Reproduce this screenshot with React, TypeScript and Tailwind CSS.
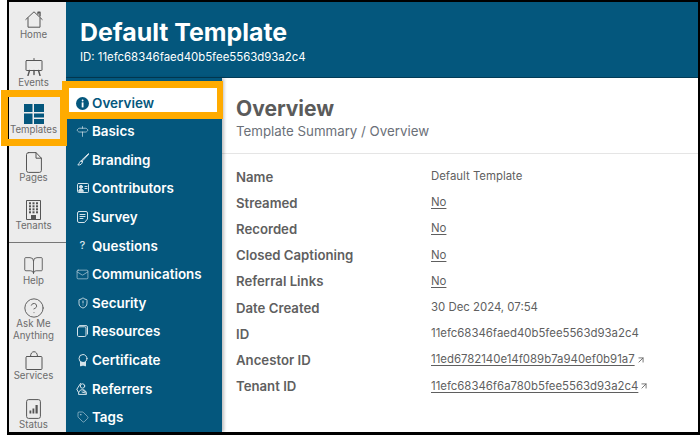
import React from "react";
import { BookOpen, CircleHelp, Signpost, Mail, ShieldAlert, Tag, ArrowUpRight } from "lucide-react";

function RailItem({ icon, label, className = "" }: { icon: React.ReactNode; label: string[]; className?: string }) {
  return (
    <div className={"flex flex-col items-center text-[#6b6b6b] pr-[8px] shrink-0 " + className}>
      <div className="h-[19px] flex items-center justify-center">{icon}</div>
      <div className="text-[9.7px] leading-[12px] mt-[0.6px] text-center whitespace-nowrap">
        {label.map((l) => (
          <div key={l}>{l}</div>
        ))}
      </div>
    </div>
  );
}

const S = { fill: "none", stroke: "#555", strokeWidth: 1, strokeLinejoin: "round" as const, strokeLinecap: "round" as const };

const HomeIcon = () => (
  <svg width="18" height="17" viewBox="0 0 18 17" {...S}>
    <path d="M0.8 8.5 9 0.8l8.2 7.7" />
    <path d="M3 7v9.2h12V7" />
    <path d="M13 3V1.2h2V5" strokeWidth="1.4" />
  </svg>
);

const EventsIcon = () => (
  <svg width="18" height="18" viewBox="0 0 18 18" {...S}>
    <path d="M9 0.5v2" />
    <rect x="1" y="2.5" width="16" height="10" rx="0.5" />
    <path d="M4.5 12.5 3 17.5M13.5 12.5 15 17.5M9 12.5v4" strokeWidth="1.4" />
  </svg>
);

const TemplatesIcon = () => (
  <svg width="20" height="20" viewBox="0 0 20 20" fill="#04577d">
    <rect x="0" y="0" width="8.5" height="8" />
    <rect x="10" y="0" width="10" height="8" />
    <rect x="0" y="9.5" width="8.5" height="10.5" />
    <rect x="10" y="9.5" width="10" height="4" />
    <rect x="10" y="15" width="10" height="5" />
  </svg>
);

const PagesIcon = () => (
  <svg width="16" height="21" viewBox="0 0 16 21" {...S}>
    <path d="M2.5 0.6h7.5l5.4 5.6v12.2a2 2 0 0 1-2 2H2.5a2 2 0 0 1-2-2V2.6a2 2 0 0 1 2-2z" />
    <path d="M10 0.6v5.6h5.4" />
  </svg>
);

const TenantIcon = () => (
  <svg width="15" height="20" viewBox="0 0 15 20" fill="#555">
    <path d="M0.5 0.5h14v19h-14z" fill="none" stroke="#555" />
    {[3, 6, 9, 12].map((y) =>
      [3, 6.5, 10].map((x) => <rect key={x + "-" + y} x={x} y={y - 0.7} width="2" height="2" />)
    )}
    <rect x="5" y="15" width="5" height="4.5" />
  </svg>
);

const BagIcon = () => (
  <svg width="18" height="19" viewBox="0 0 18 19" {...S}>
    <rect x="1" y="5.5" width="16" height="13" rx="1" />
    <path d="M5.5 5.5C5.5 2.5 7 0.7 9 0.7s3.5 1.8 3.5 4.8" />
  </svg>
);

const StatusIcon = () => (
  <svg width="15" height="20" viewBox="0 0 15 20" fill="none" stroke="#555" strokeWidth="1">
    <rect x="0.6" y="0.6" width="13.8" height="18.8" rx="2" />
    <rect x="3.5" y="11.5" width="1.8" height="3" fill="#555" stroke="none" />
    <rect x="6.5" y="9.5" width="1.8" height="5" fill="#555" stroke="none" />
    <rect x="9.5" y="6" width="2.2" height="8.5" fill="#555" stroke="none" />
  </svg>
);

const M = { fill: "none", stroke: "#d5e3ea", strokeWidth: 1, strokeLinejoin: "round" as const, strokeLinecap: "round" as const };

const BrushIcon = () => (
  <svg width="12" height="13" viewBox="0 0 12 13" {...M}>
    <path d="M11.3 0.8 5 6.8 4 8.6l1.6-.8 6-6.4z" />
    <path d="M4.2 7.6C2 8.6 2.6 10.6 0.8 12c2.6.2 4.5-.8 4.8-3.6" />
  </svg>
);

const CardIcon = () => (
  <svg width="12" height="10" viewBox="0 0 12 10" {...M}>
    <rect x="0.5" y="0.5" width="11" height="9" rx="1" />
    <circle cx="4" cy="3.8" r="1.5" fill="#d5e3ea" />
    <path d="M1.7 8c.3-1.5 1.2-2 2.3-2s2 .5 2.3 2z" fill="#d5e3ea" />
    <path d="M8 3.5h2M8 5.5h2" />
  </svg>
);

const SurveyIcon = () => (
  <svg width="11" height="12" viewBox="0 0 11 12" {...M}>
    <path d="M2 0.5h7a1.5 1.5 0 0 1 1.5 1.5v6L7.5 11.5H2A1.5 1.5 0 0 1 .5 10V2A1.5 1.5 0 0 1 2 .5z" />
    <path d="M3 3.5h5M3 5.5h5M3 7.5h3" />
  </svg>
);

const ResourcesIcon = () => (
  <svg width="11" height="12" viewBox="0 0 11 12" {...M}>
    <rect x="0.5" y="1.8" width="8.5" height="9.7" rx="1.2" />
    <path d="M2.5 0.6h6.5a1.5 1.5 0 0 1 1.5 1.5v7" />
  </svg>
);

const CertIcon = () => (
  <svg width="10" height="13" viewBox="0 0 10 13" {...M}>
    <circle cx="5" cy="4.5" r="4" />
    <path d="M2.5 8v4l2.5-1 2.5 1V8" fill="#d5e3ea" />
  </svg>
);

const ReferrerIcon = () => (
  <svg width="13" height="13" viewBox="0 0 13 13" {...M}>
    <circle cx="6.5" cy="4" r="2.2" />
    <path d="M2.5 12c0-3 1.8-4.3 4-4.3s4 1.3 4 4.3zM1 7l3.5-5.5M2.5 10.5 1 7.5" />
    <path d="M7 8.5l3 1.5M6 10l3.5 1" />
  </svg>
);

const InfoIcon = () => (
  <svg width="13" height="13" viewBox="0 0 13 13">
    <circle cx="6.5" cy="6.5" r="6.5" fill="#04577d" />
    <rect x="5.7" y="2.6" width="1.8" height="1.8" rx="0.9" fill="white" />
    <rect x="5.7" y="5.4" width="1.8" height="5" fill="white" />
  </svg>
);

const menu: [string, React.ReactNode][] = [
  ["Basics", <Signpost size={13} strokeWidth={1.3} />],
  ["Branding", <BrushIcon />],
  ["Contributors", <CardIcon />],
  ["Survey", <SurveyIcon />],
  ["Questions", <span className="text-[11px] font-medium leading-none">?</span>],
  ["Communications", <Mail size={13} strokeWidth={1.1} />],
  ["Security", <ShieldAlert size={12} strokeWidth={1.5} className="text-white" />],
  ["Resources", <ResourcesIcon />],
  ["Certificate", <CertIcon />],
  ["Referrers", <ReferrerIcon />],
  ["Tags", <Tag size={12} strokeWidth={1.1} />],
];

const rows: [string, string, boolean, boolean][] = [
  ["Name", "Default Template", false, false],
  ["Streamed", "No", true, false],
  ["Recorded", "No", true, false],
  ["Closed Captioning", "No", true, false],
  ["Referral Links", "No", true, false],
  ["Date Created", "30 Dec 2024, 07:54", false, false],
  ["ID", "11efc68346faed40b5fee5563d93a2c4", false, false],
  ["Ancestor ID", "11ed6782140e14f089b7a940ef0b91a7", true, true],
  ["Tenant ID", "11efc68346f6a780b5fee5563d93a2c4", true, true],
];

export default function App() {
  return (
    <div className="relative w-[700px] h-[435px] bg-white pl-[7px] overflow-hidden" style={{ fontFamily: "Inter, sans-serif" }}>
      <div className="flex h-full border-2 border-b-[3px] border-black overflow-hidden">
        <aside className="w-[57px] shrink-0 bg-[#ececec] flex flex-col pt-[7.5px]">
          <RailItem className="h-[47.7px]" icon={<HomeIcon />} label={["Home"]} />
          <RailItem className="h-[47.7px]" icon={<EventsIcon />} label={["Events"]} />
          <RailItem className="h-[47.7px]" icon={<TemplatesIcon />} label={["Templates"]} />
          <RailItem className="h-[47.7px]" icon={<PagesIcon />} label={["Pages"]} />
          <RailItem className="h-[42px]" icon={<TenantIcon />} label={["Tenants"]} />
          <div className="border-t border-[#777] pt-[12.5px] flex flex-col">
            <RailItem className="h-[43px]" icon={<BookOpen size={21} strokeWidth={1} color="#555" />} label={["Help"]} />
            <RailItem className="h-[52px]" icon={<CircleHelp size={22} strokeWidth={1} color="#555" />} label={["Ask Me", "Anything"]} />
            <RailItem className="h-[48.5px]" icon={<BagIcon />} label={["Services"]} />
            <RailItem icon={<StatusIcon />} label={["Status"]} />
          </div>
        </aside>
        <div className="flex-1 flex flex-col min-w-0">
          <header className="h-[76px] shrink-0 bg-[#04577d] text-white pl-[14px] pt-[14px] border-b border-[#033c57]">
            <h1 className="text-[24.9px] leading-[32px] font-bold">Default Template</h1>
            <p className="text-[11.4px] leading-[14px] mt-[2px]">ID: 11efc68346faed40b5fee5563d93a2c4</p>
          </header>
          <div className="flex-1 flex min-h-0">
            <nav className="w-[156px] shrink-0 bg-[#04577d] text-white pt-[10px] shadow-[2px_0_3px_rgba(0,0,0,0.25)] z-0">
              <div className="h-[24px] flex items-center mr-[5px] ml-[3px] bg-white text-[#04577d] pl-[7px] pt-[6px] gap-[3px] text-[13.5px] font-semibold">
                <InfoIcon />
                Overview
              </div>
              <ul className="mt-[5px]">
                {menu.map(([name, icon]) => (
                  <li key={name} className="h-[28.6px] flex items-center pl-[10px] text-[13.4px] font-semibold">
                    <span className="w-[13px] flex justify-center text-[#d5e3ea] mr-[3px]">{icon}</span>
                    {name}
                  </li>
                ))}
              </ul>
            </nav>
            <main className="flex-1 min-w-0 bg-white">
              <div className="h-[76px] pl-[14px] pt-[18px] border-b border-[#e5e5e5]">
                <h2 className="text-[21px] leading-[26px] font-bold text-[#5b5b5b]">Overview</h2>
                <p className="text-[13.3px] leading-[16px] mt-[1px] text-[#6b7078]">Template Summary / Overview</p>
              </div>
              <dl className="pl-[14px] pt-[10.5px]">
                {rows.map(([k, v, link, ext]) => (
                  <div key={k} className="h-[26.2px] flex items-center">
                    <dt className="w-[195px] text-[13.2px] font-semibold text-[#5f5f5f] shrink-0">{k}</dt>
                    <dd className="text-[11.4px] text-[#5f5f5f] flex items-center -translate-y-[1px]">
                      <span className={link ? "underline underline-offset-2" : ""}>{v}</span>
                      {ext && <ArrowUpRight size={10} className="ml-[1px]" />}
                    </dd>
                  </div>
                ))}
              </dl>
            </main>
          </div>
        </div>
      </div>
      <div className="absolute left-[1px] top-[90px] w-[66px] h-[56px] border-[7px] border-[#ffab00]" />
      <div className="absolute left-[62px] top-[81px] w-[161px] h-[38px] border-[7px] border-r-[6px] border-[#ffab00]" />
    </div>
  );
}
